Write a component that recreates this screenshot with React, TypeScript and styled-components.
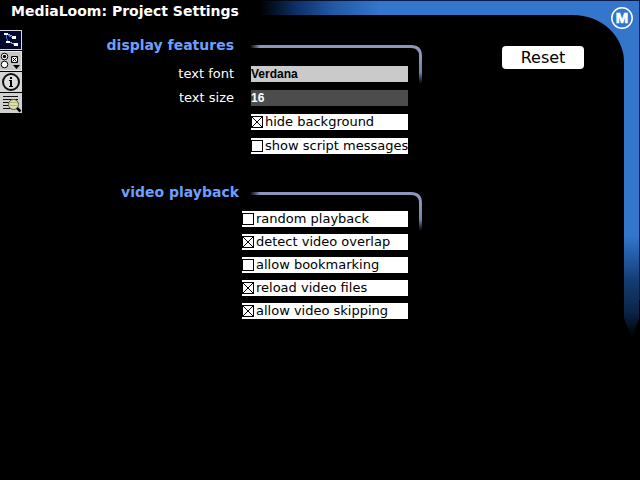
import React from "react";
import styled, { createGlobalStyle } from "styled-components";

const GlobalStyle = createGlobalStyle`
  * { box-sizing: border-box; }
  body {
    margin: 0;
    background: #000;
    color: #fff;
    font-family: Verdana, "DejaVu Sans", sans-serif;
    font-size: 13px;
    line-height: 16px;
  }
`;

const Page = styled.div`
  position: relative;
  min-height: 100vh;
`;

const Frame = styled.svg`
  position: absolute;
  top: 0;
  right: 0;
  pointer-events: none;
`;

const Header = styled.header`
  position: relative;
  height: 29px;
  padding: 3px 0 0 11px;
`;

const Title = styled.h1`
  margin: 0;
  font-size: 14px;
  line-height: 16px;
`;

const Body = styled.div`
  position: relative;
  display: grid;
  grid-template-columns: 22px 400px 1fr;
  align-items: start;
`;

const Toolbar = styled.nav`
  display: flex;
  flex-direction: column;
  padding-top: 1px;
`;

const Tool = styled.button`
  width: 22px;
  height: 21px;
  padding: 0;
  border: 0;
  background: none;
  svg { display: block; }
`;

const Settings = styled.main`
  display: flex;
  flex-direction: column;
  gap: 30px;
  padding-top: 8px;
`;

const Section = styled.section`
  display: flex;
  flex-direction: column;
`;

const Heading = styled.div<{ $column: number; $height: number }>`
  position: relative;
  height: ${(p) => p.$height}px;
  width: ${(p) => p.$column}px;
`;

const SectionTitle = styled.h2`
  margin: 0;
  color: #6c9fff;
  font-size: 14px;
  line-height: 16px;
  text-align: right;
`;

const Rule = styled.svg<{ $gap: number }>`
  position: absolute;
  left: calc(100% + ${(p) => p.$gap}px);
  top: 7px;
  pointer-events: none;
`;

const Rows = styled.div<{ $gap: number }>`
  display: flex;
  flex-direction: column;
  gap: ${(p) => p.$gap}px;
  padding-right: 14px;
`;

const FieldRow = styled.div`
  display: grid;
  grid-template-columns: 212px 1fr;
  column-gap: 17px;
`;

const FieldLabel = styled.label`
  text-align: right;
`;

const Field = styled.input<{ $dark?: boolean }>`
  width: 100%;
  min-width: 0;
  height: 16px;
  padding: 0;
  border: 0;
  border-radius: 0;
  background: ${(p) => (p.$dark ? "#4c4c4c" : "#cacaca")};
  color: ${(p) => (p.$dark ? "#fff" : "#000")};
  font: bold 12px/16px "Liberation Sans", Arial, sans-serif;
`;

const Option = styled.label<{ $indent: number }>`
  display: flex;
  align-items: center;
  gap: 2px;
  height: 16px;
  margin-left: ${(p) => p.$indent}px;
  background: #fff;
  color: #000;
  white-space: nowrap;
`;

const Check = styled.input`
  appearance: none;
  flex: none;
  width: 12px;
  height: 12px;
  margin: 0;
  border: 1px solid #000;
  background: #fff;
  &:checked {
    background:
      linear-gradient(45deg, transparent 46%, #000 46%, #000 54%, transparent 54%),
      linear-gradient(-45deg, transparent 46%, #000 46%, #000 54%, transparent 54%);
  }
`;

const Actions = styled.div`
  display: flex;
  padding: 17px 0 0 80px;
`;

const ResetButton = styled.button`
  width: 82px;
  height: 23px;
  padding: 0;
  border: 0;
  border-radius: 4px;
  background: #fff;
  color: #000;
  font: 16px/22px Verdana, "DejaVu Sans", sans-serif;
`;

const Monogram = styled.text`
  fill: #fff;
  stroke: #fff;
  stroke-width: 0.6;
  font: bold 15px "Liberation Sans", Arial, sans-serif;
  text-anchor: middle;
`;

function FrameArt() {
  return (
    <Frame width="390" height="345" viewBox="0 0 390 345" aria-hidden="true">
      <defs>
        <linearGradient id="fadeLeft" x1="0" x2="1" y1="0" y2="0">
          <stop offset="0" stopColor="#000" />
          <stop offset="0.3" stopColor="#0d2f66" />
          <stop offset="0.6" stopColor="#2058a4" />
          <stop offset="1" stopColor="#3476cb" />
        </linearGradient>
        <linearGradient id="edgeLeft" x1="0" x2="1" y1="0" y2="0">
          <stop offset="0" stopColor="#081c4c" stopOpacity="0" />
          <stop offset="0.3" stopColor="#081c4c" />
        </linearGradient>
        <linearGradient id="fadeDown" x1="0" x2="0" y1="0" y2="1">
          <stop offset="0" stopColor="#3476cb" />
          <stop offset="0.2" stopColor="#245ca8" />
          <stop offset="0.45" stopColor="#143c72" />
          <stop offset="0.75" stopColor="#0a2448" />
          <stop offset="1" stopColor="#000" />
        </linearGradient>
      </defs>
      <rect x="10" y="1" width="120" height="14" fill="url(#fadeLeft)" />
      <rect x="10" y="0" width="379" height="1" fill="url(#edgeLeft)" />
      <path d="M130 1H389V235H374V62A51 47 0 0 0 323 15H130Z" fill="#3476cb" />
      <path d="M374 235H389V318L382 338L374 318Z" fill="url(#fadeDown)" />
      <rect x="389" y="0" width="1" height="300" fill="#081c4c" />
      <circle cx="372" cy="18" r="10.200" fill="none" stroke="#fff" strokeWidth="1.500" />
      <Monogram x="372" y="23">M</Monogram>
    </Frame>
  );
}

function Bracket({ id, gap }: { id: string; gap: number }) {
  return (
    <Rule $gap={gap} width="174" height="42" viewBox="0 0 174 42" aria-hidden="true">
      <defs>
        <linearGradient id={id + "h"} gradientUnits="userSpaceOnUse" x1="0" x2="10" y1="0" y2="0">
          <stop offset="0" stopColor="#8c95ba" stopOpacity="0" />
          <stop offset="1" stopColor="#8c95ba" />
        </linearGradient>
        <linearGradient id={id + "v"} gradientUnits="userSpaceOnUse" x1="0" x2="0" y1="12" y2="40">
          <stop offset="0" stopColor="#8c95ba" />
          <stop offset="0.6" stopColor="#7280ac" />
          <stop offset="1" stopColor="#606c98" stopOpacity="0" />
        </linearGradient>
      </defs>
      <rect x="0" y="1" width="161" height="3" fill={`url(#${id}h)`} />
      <path d="M161 2.5Q170.500 2.500 170.500 12V40" fill="none" stroke={`url(#${id}v)`} strokeWidth="3" />
    </Rule>
  );
}

function MapIcon() {
  return (
    <svg width="22" height="21" viewBox="0 0 22 21" shapeRendering="crispEdges" aria-hidden="true">
      <rect width="22" height="21" fill="#000" />
      <rect width="22" height="20" fill="#d4d8e0" />
      <rect x="0" y="1" width="21" height="18" fill="#03082c" />
      <path d="M6 4L13 8M6 5L8 12M9 12L15 15" stroke="#3f6fd8" fill="none" />
      <path d="M4 3h4v2h-4zM12 6h4v3h-4zM6 11h4v2h-4zM14 13h4v3h-4z" fill="#fff" />
      <path d="M8 4h2v1h-2zM10 5h2v1h-2zM10 12h2v1h-2zM12 13h2v1h-2z" fill="#86aef8" />
    </svg>
  );
}

function ControlsIcon() {
  return (
    <svg width="22" height="21" viewBox="0 0 22 21" aria-hidden="true">
      <rect width="22" height="21" fill="#000" />
      <rect width="22" height="20" fill="#e8e8e8" />
      <rect y="1" width="21" height="18" fill="#c6c6c6" />
      <circle cx="4.500" cy="5.500" r="3.300" fill="#fff" stroke="#000" />
      <circle cx="4.500" cy="5.500" r="1.700" fill="#000" />
      <circle cx="4.500" cy="13.500" r="3.300" fill="#fff" stroke="#000" />
      <path d="M11.500 5.500h6v6h-6z" fill="#fff" stroke="#000" />
      <path d="M12.500 6.500l4 4M16.500 6.500l-4 4" stroke="#000" />
      <path d="M13 14h7l-3.500 4z" fill="#000" />
    </svg>
  );
}

function InfoIcon() {
  return (
    <svg width="22" height="21" viewBox="0 0 22 21" aria-hidden="true">
      <rect width="22" height="21" fill="#000" />
      <rect width="22" height="20" fill="#d6d6d6" />
      <circle cx="11" cy="10" r="8" fill="#dedede" stroke="#111" strokeWidth="2" />
      <path d="M10 5h2v2h-2zM9 8h3v6h1v1h-4v-1h1v-5h-1z" fill="#000" />
    </svg>
  );
}

function SearchIcon() {
  return (
    <svg width="22" height="21" viewBox="0 0 22 21" aria-hidden="true">
      <rect width="22" height="21" fill="#000" />
      <rect width="22" height="20" fill="#d0d0d0" />
      <path d="M3 3.500h15M3 6.500h15M3 9.500h8M3 12.500h8M3 15.500h9" stroke="#111" />
      <circle cx="13.500" cy="11.500" r="5" fill="#dde0a4" stroke="#55573c" />
      <path d="M10 9.500h7M10 12.500h7" stroke="#b4b784" />
      <path d="M17 15l3.500 3.500" stroke="#000" strokeWidth="2.500" />
    </svg>
  );
}

const tools = [
  { label: "Map", Icon: MapIcon },
  { label: "Project settings", Icon: ControlsIcon },
  { label: "Information", Icon: InfoIcon },
  { label: "Search text", Icon: SearchIcon },
];

const displayOptions = [
  { label: "hide background", on: true },
  { label: "show script messages", on: false },
];

const videoOptions = [
  { label: "random playback", on: false },
  { label: "detect video overlap", on: true },
  { label: "allow bookmarking", on: false },
  { label: "reload video files", on: true },
  { label: "allow video skipping", on: true },
];

export default function App() {
  return (
    <Page>
      <GlobalStyle />
      <FrameArt />
      <Header>
        <Title>MediaLoom: Project Settings</Title>
      </Header>
      <Body>
        <Toolbar>
          {tools.map(({ label, Icon }) => (
            <Tool key={label} type="button" aria-label={label}>
              <Icon />
            </Tool>
          ))}
        </Toolbar>
        <Settings>
          <Section>
            <Heading $column={212} $height={29}>
              <SectionTitle>display features</SectionTitle>
              <Bracket id="display" gap={16} />
            </Heading>
            <Rows $gap={8}>
              <FieldRow>
                <FieldLabel htmlFor="font">text font</FieldLabel>
                <Field id="font" defaultValue="Verdana" />
              </FieldRow>
              <FieldRow>
                <FieldLabel htmlFor="size">text size</FieldLabel>
                <Field id="size" $dark defaultValue="16" />
              </FieldRow>
              {displayOptions.map((o) => (
                <Option key={o.label} $indent={229}>
                  <Check type="checkbox" defaultChecked={o.on} />
                  {o.label}
                </Option>
              ))}
            </Rows>
          </Section>
          <Section>
            <Heading $column={217} $height={27}>
              <SectionTitle>video playback</SectionTitle>
              <Bracket id="video" gap={11} />
            </Heading>
            <Rows $gap={7}>
              {videoOptions.map((o) => (
                <Option key={o.label} $indent={220}>
                  <Check type="checkbox" defaultChecked={o.on} />
                  {o.label}
                </Option>
              ))}
            </Rows>
          </Section>
        </Settings>
        <Actions>
          <ResetButton type="reset">Reset</ResetButton>
        </Actions>
      </Body>
    </Page>
  );
}
